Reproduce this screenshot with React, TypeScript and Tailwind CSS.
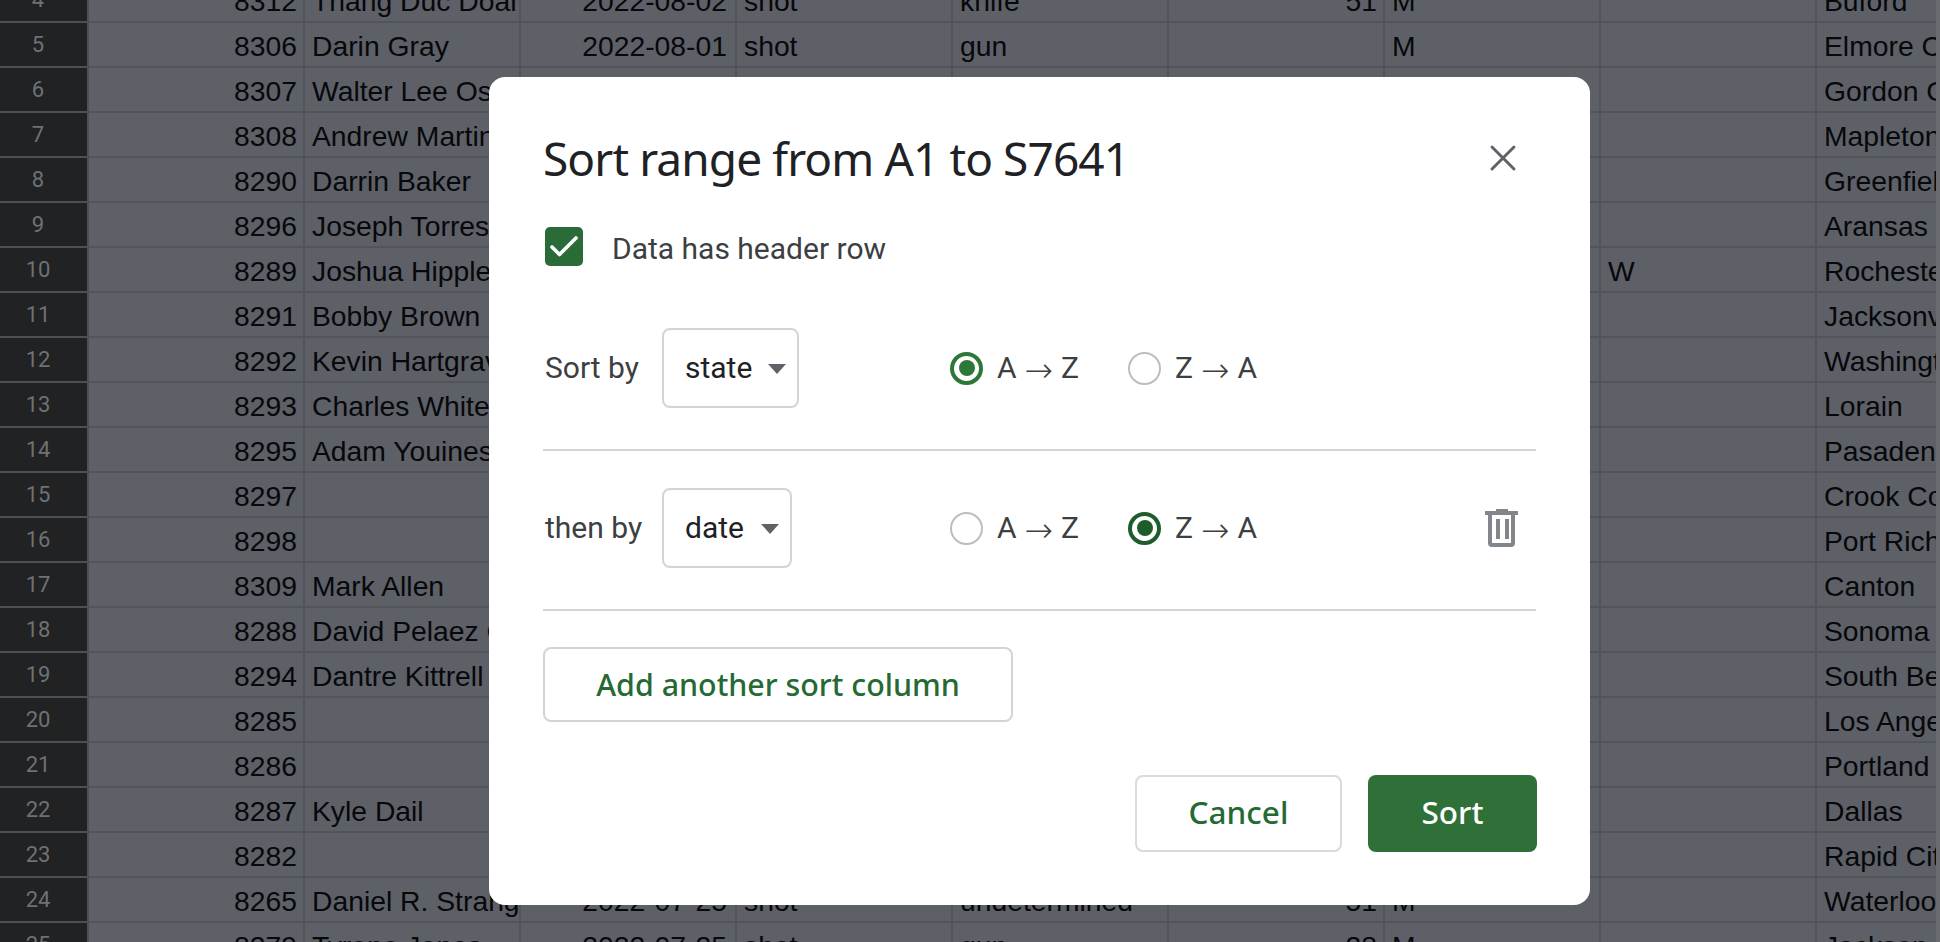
import { Check, X } from "lucide-react";

type Row = {
  n: number;
  id: string;
  name?: string;
  date?: string;
  manner?: string;
  armed?: string;
  age?: string;
  gender?: string;
  race?: string;
  city: string;
};

const rows: Row[] = [
  { n: 4, id: "8312", name: "Thang Duc Doan", date: "2022-08-02", manner: "shot", armed: "knife", age: "51", gender: "M", city: "Buford" },
  { n: 5, id: "8306", name: "Darin Gray", date: "2022-08-01", manner: "shot", armed: "gun", gender: "M", city: "Elmore City" },
  { n: 6, id: "8307", name: "Walter Lee Osborne", city: "Gordon County" },
  { n: 7, id: "8308", name: "Andrew Martin", city: "Mapleton" },
  { n: 8, id: "8290", name: "Darrin Baker", city: "Greenfield" },
  { n: 9, id: "8296", name: "Joseph Torres", city: "Aransas" },
  { n: 10, id: "8289", name: "Joshua Hippler", race: "W", city: "Rochester" },
  { n: 11, id: "8291", name: "Bobby Brown", city: "Jacksonville" },
  { n: 12, id: "8292", name: "Kevin Hartgrave", city: "Washington" },
  { n: 13, id: "8293", name: "Charles White", city: "Lorain" },
  { n: 14, id: "8295", name: "Adam Youines", city: "Pasadena" },
  { n: 15, id: "8297", city: "Crook County" },
  { n: 16, id: "8298", city: "Port Richey" },
  { n: 17, id: "8309", name: "Mark Allen", city: "Canton" },
  { n: 18, id: "8288", name: "David Pelaez Chavez", city: "Sonoma" },
  { n: 19, id: "8294", name: "Dantre Kittrell", city: "South Bend" },
  { n: 20, id: "8285", city: "Los Angeles" },
  { n: 21, id: "8286", city: "Portland" },
  { n: 22, id: "8287", name: "Kyle Dail", city: "Dallas" },
  { n: 23, id: "8282", city: "Rapid City" },
  { n: 24, id: "8265", name: "Daniel R. Strang", date: "2022-07-25", manner: "shot", armed: "undetermined", age: "51", gender: "M", city: "Waterloo" },
  { n: 25, id: "8279", name: "Tyrone Jones", date: "2022-07-25", manner: "shot", armed: "gun", age: "28", gender: "M", city: "Jackson" },
];

function Cell({ text, right, wide }: { text?: string; right?: boolean; wide?: boolean }) {
  return (
    <div
      className={`w-[216px] shrink-0 overflow-hidden whitespace-nowrap border-r-2 border-[#515459] ${
        right ? "text-right" : "pl-[7px] text-left"
      } ${right && wide ? "pr-2" : ""} ${right && !wide ? "pr-[6px]" : ""}`}
    >
      {text}
    </div>
  );
}

function SheetRow({ row }: { row: Row }) {
  return (
    <div className="flex h-[45px] leading-[46px]">
      <div className="w-[89px] shrink-0 border-r-2 border-b-2 border-[#4e5053] bg-[#212223] pr-[11px] text-center font-['Roboto',sans-serif] text-[22px] leading-[43px] text-[#707173]">
        {row.n}
      </div>
      <div className="flex flex-1 border-b-2 border-[#515459]">
        <Cell text={row.id} right />
        <Cell text={row.name} />
        <Cell text={row.date} right wide />
        <Cell text={row.manner} />
        <Cell text={row.armed} />
        <Cell text={row.age} right />
        <Cell text={row.gender} />
        <Cell text={row.race} />
        <div className="flex-1 overflow-hidden whitespace-nowrap pl-[7px]">{row.city}</div>
      </div>
    </div>
  );
}

function Select({ label, width }: { label: string; width: string }) {
  return (
    <div className={`flex h-[80px] items-center justify-between rounded-lg border-2 border-[#d3d3da] pl-[21px] pr-[11px] ${width}`}>
      <span className="text-[30px] leading-none text-[#202124]">{label}</span>
      <svg width="18" height="10" viewBox="0 0 18 10" className="mt-[1px] fill-[#5f6368]">
        <path d="M0 0h18l-9 10z" />
      </svg>
    </div>
  );
}

function Radio({ from, to, on, dark }: { from: string; to: string; on?: boolean; dark?: boolean }) {
  const ring = !on ? "border-2 border-[#bdbdbd]" : dark ? "border-[4px] border-[#1e5c2c]" : "border-[4px] border-[#2d7738]";
  return (
    <div className="flex w-[178px] items-center gap-[14px]">
      <div className={`flex h-[33px] w-[33px] items-center justify-center rounded-full ${ring}`}>
        {on && <div className={`h-[16px] w-[16px] rounded-full ${dark ? "bg-[#1e5c2c]" : "bg-[#2d7738]"}`} />}
      </div>
      <span className="flex items-center gap-[8px] text-[30px] leading-none text-[#3c4043]">
        {from}
        <span className="mt-[4px] font-['DejaVu_Sans',sans-serif] text-[34px] font-extralight leading-[30px]">→</span>
        {to}
      </span>
    </div>
  );
}

export default function App() {
  return (
    <div className="relative h-[942px] w-[1940px] overflow-hidden bg-[#5d6066] font-['Liberation_Sans',Arial,sans-serif] text-[28.3px] text-[#07080b]">
      <div className="-mt-[22px] pr-1">
        {rows.map((r) => (
          <SheetRow key={r.n} row={r} />
        ))}
      </div>
      <div className="absolute inset-y-0 right-0 w-1 bg-[#696b70]" />

      {/* sort dialog */}
      <div className="absolute left-[489px] top-[77px] flex h-[828px] w-[1101px] flex-col rounded-[16px] bg-white px-[54px] font-['Roboto',sans-serif] text-[#3c4043]">
        <div className="mt-[50px] flex h-[62px] items-center justify-between">
          <h1 className="font-['Noto_Sans',sans-serif] text-[46px] font-normal tracking-[-0.9px] text-[#202124]">Sort range from A1 to S7641</h1>
          <X className="mr-[11px] text-[#5f6368]" size={44} strokeWidth={1.6} />
        </div>

        <div className="mt-[38px] flex h-[39px] items-center pl-[2px]">
          <div className="flex h-[39px] w-[38px] items-center justify-center rounded-[5px] bg-[#2b6b37]">
            <Check className="text-white" size={36} strokeWidth={2.4} />
          </div>
          <span className="ml-[29px] mt-[4px] text-[30px] leading-none">Data has header row</span>
        </div>

        <div className="mt-[62px] flex h-[80px] items-center pl-[2px]">
          <span className="w-[117px] text-[30px] leading-none">Sort by</span>
          <Select label="state" width="w-[137px]" />
          <div className="ml-[151px] flex">
            <Radio from="A" to="Z" on />
            <Radio from="Z" to="A" />
          </div>
        </div>

        <div className="mt-[41px] h-[2px] bg-[#d3d3da]" />

        <div className="mt-[37px] flex h-[80px] items-center pl-[2px]">
          <span className="w-[117px] text-[30px] leading-none">then by</span>
          <Select label="date" width="w-[130px]" />
          <div className="ml-[158px] flex flex-1 items-center justify-between">
            <div className="flex">
              <Radio from="A" to="Z" />
              <Radio from="Z" to="A" on dark />
            </div>
            <svg width="33" height="38" viewBox="0 0 33 38" className="mr-[18px] fill-[#80868b]">
              <path
                fillRule="evenodd"
                d="M11 0h12v2h10v4H0V2h11zM3 6h27v28a4 4 0 0 1-4 4H7a4 4 0 0 1-4-4zm4 0v28h19V6zm4 4h4v20h-4zm9 0h4v20h-4z"
              />
            </svg>
          </div>
        </div>

        <div className="mt-[41px] h-[2px] bg-[#d3d3da]" />

        <button className="mt-[36px] h-[75px] w-[470px] rounded-lg border-2 border-[#d3d3da] font-['Noto_Sans',sans-serif] text-[30.4px] font-medium text-[#256a34]">
          Add another sort column
        </button>

        <div className="-mr-px mt-[53px] flex justify-end gap-[26px]">
          <button className="h-[77px] w-[207px] rounded-lg border-2 border-[#d9d9de] pb-[3px] font-['Noto_Sans',sans-serif] text-[31.5px] font-medium text-[#256a34]">
            Cancel
          </button>
          <button className="h-[77px] w-[169px] rounded-lg bg-[#2e7038] pb-[3px] font-['Noto_Sans',sans-serif] text-[31.5px] font-medium text-white">
            Sort
          </button>
        </div>
      </div>
    </div>
  );
}
